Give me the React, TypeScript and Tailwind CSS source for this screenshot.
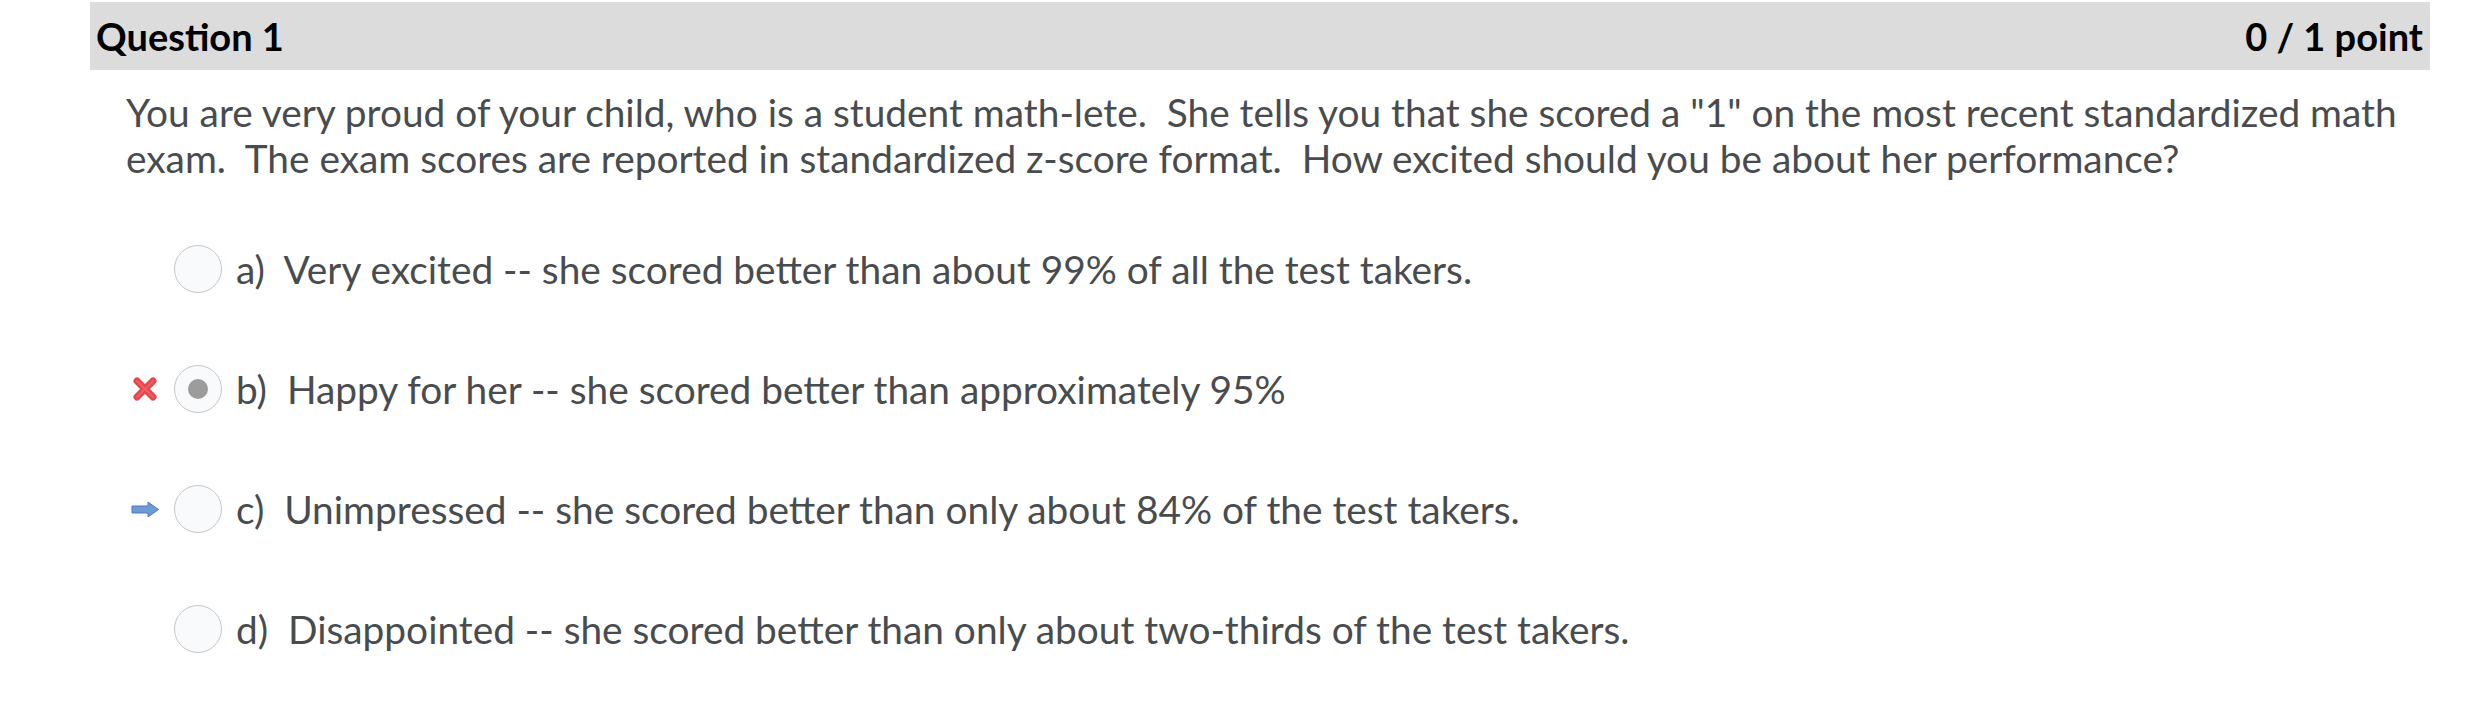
import React from "react";

const options = [
  { label: "a)", text: "Very excited -- she scored better than about 99% of all the test takers.", mark: null, selected: false },
  { label: "b)", text: "Happy for her -- she scored better than approximately 95%", mark: "x", selected: true },
  { label: "c)", text: "Unimpressed -- she scored better than only about 84% of the test takers.", mark: "arrow", selected: false },
  { label: "d)", text: "Disappointed -- she scored better than only about two-thirds of the test takers.", mark: null, selected: false },
];

function CrossIcon() {
  return (
    <svg width="26" height="26" viewBox="0 0 26 26">
      <path d="M5 5 L21 21 M21 5 L5 21" stroke="#e5474d" strokeWidth="7" strokeLinecap="round" />
      <path d="M5 5 L21 21 M21 5 L5 21" stroke="#f47b7f" strokeWidth="2" strokeLinecap="round" opacity="0.5" />
    </svg>
  );
}

function ArrowIcon() {
  return (
    <svg width="29" height="17" viewBox="0 0 29 17">
      <path
        d="M1 5 H17 V1 L27.5 8.5 L17 16 V12 H1 Z"
        fill="#6c9bd6"
        stroke="#4f7cbc"
        strokeWidth="1"
        strokeLinejoin="round"
      />
    </svg>
  );
}

export default function App() {
  return (
    <div
      className="w-[2468px] h-[720px] bg-white pl-[90px] pr-[38px] pt-[2px]"
      style={{ fontFamily: "Lato, 'Open Sans', sans-serif" }}
    >
      <div className="h-[68px] bg-[#dcdcdc] flex items-center justify-between pl-[6px] pr-[7px]">
        <span className="text-[38px] font-bold text-black leading-none">Question 1</span>
        <span className="text-[38px] font-bold text-black leading-none">0 / 1 point</span>
      </div>
      <div className="ml-[36px] mt-[19px] text-[38.85px] leading-[46px] text-[#494c4e]">
        You are very proud of your child, who is a student math-lete.{"\u00a0 "}She tells you that she scored a "1" on the most recent standardized math exam.{"\u00a0 "}The exam scores are reported in standardized z-score format.{"\u00a0 "}How excited should you be about her performance?
      </div>
      <div className="ml-[36px] mt-[28px] flex flex-col">
        {options.map((o) => (
          <div key={o.label} className="h-[120px] flex items-center">
            <div className="w-[38px] flex justify-center items-center">
              {o.mark === "x" && <CrossIcon />}
              {o.mark === "arrow" && <ArrowIcon />}
            </div>
            <div className="ml-[10px] w-[48px] h-[48px] rounded-full border-[1.5px] border-[#c4c6c8] bg-[#f9fafc] flex items-center justify-center">
              {o.selected && <div className="w-[20px] h-[20px] rounded-full bg-[#9c9c9c]" />}
            </div>
            <div className="ml-[14px] text-[38.85px] leading-[46px] text-[#494c4e] whitespace-pre">
              {o.label}{"\u00a0 "}{o.text}
            </div>
          </div>
        ))}
      </div>
    </div>
  );
}
